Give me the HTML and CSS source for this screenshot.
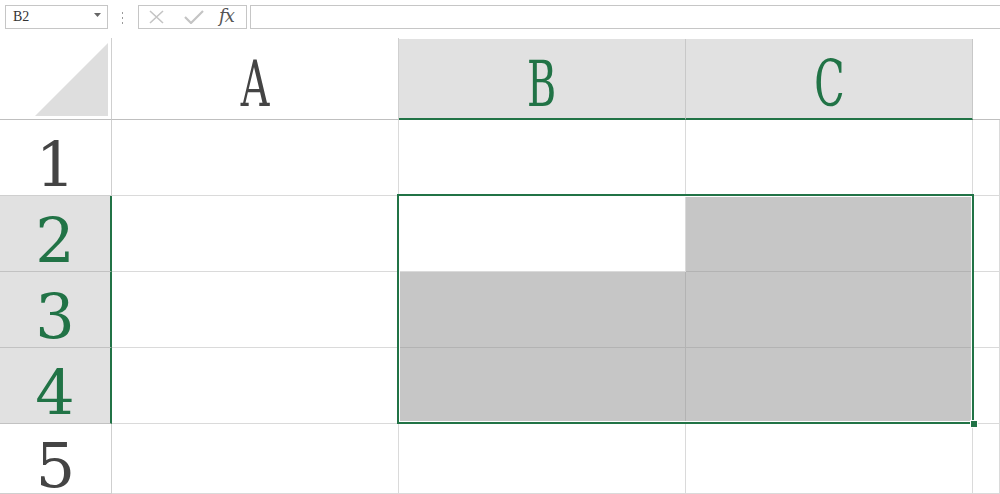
FILE: index.html
```html
<!DOCTYPE html>
<html lang="en">
<head>
  <meta charset="UTF-8" />
  <title>Sheet</title>
  <link rel="stylesheet" href="styles.css">
</head>
<body>

  <!-- Barra de fórmulas -->
  <div class="toolbar">
    <div class="namebox">
      <span>B2</span>
      <svg class="caret" width="7" height="4" viewBox="0 0 7 4"><path d="M0 0h7L3.5 4z" fill="#666"/></svg>
    </div>
    <svg class="grip" width="3" height="12" viewBox="0 0 3 12">
      <rect x="1" y="0" width="1" height="2" fill="#9a9a9a"/>
      <rect x="1" y="5" width="1" height="2" fill="#9a9a9a"/>
      <rect x="1" y="10" width="1" height="2" fill="#9a9a9a"/>
    </svg>
    <div class="fnbox">
      <svg width="17" height="14" viewBox="0 0 17 14"><path d="M2 1l13 12M15 1L2 13" stroke="#c4c4c4" stroke-width="1.6" fill="none"/></svg>
      <svg width="20" height="14" viewBox="0 0 20 14"><path d="M1 7l6 6L19 1" stroke="#c4c4c4" stroke-width="2.2" fill="none"/></svg>
      <span class="fx">fx</span>
    </div>
    <div class="formula"></div>
  </div>

  <!-- Hoja -->
  <div class="sheet">
    <div class="cell corner">
      <svg width="73" height="73" viewBox="0 0 73 73"><path d="M73 0V73H0z" fill="#dedede"/></svg>
    </div>
    <div class="cell colhead"><span class="letter">A</span></div>
    <div class="cell colhead sel"><span class="letter">B</span></div>
    <div class="cell colhead sel last"><span class="letter">C</span></div>
    <div class="cell colhead blank"></div>

    <div class="cell rowhead"><span class="num">1</span></div>
    <div class="cell"></div>
    <div class="cell"></div>
    <div class="cell"></div>
    <div class="cell"></div>

    <div class="cell rowhead sel"><span class="num">2</span></div>
    <div class="cell"></div>
    <div class="cell"></div>
    <div class="cell picked"></div>
    <div class="cell"></div>

    <div class="cell rowhead sel"><span class="num">3</span></div>
    <div class="cell"></div>
    <div class="cell picked"></div>
    <div class="cell picked"></div>
    <div class="cell"></div>

    <div class="cell rowhead sel"><span class="num">4</span></div>
    <div class="cell"></div>
    <div class="cell picked"></div>
    <div class="cell picked"></div>
    <div class="cell"></div>

    <div class="cell rowhead"><span class="num">5</span></div>
    <div class="cell"></div>
    <div class="cell"></div>
    <div class="cell"></div>
    <div class="cell"></div>

    <div class="selection"><span class="handle"></span></div>
  </div>

</body>
</html>
```

FILE: styles.css
```css
body {
  margin: 0;
  background: #fff;
  font-family: "Liberation Serif", "Times New Roman", "DejaVu Serif", "Noto Serif", serif;
  overflow: hidden;
}

/* barra superior */
.toolbar {
  height: 38px;
  display: flex;
  align-items: flex-start;
  padding: 5px 0 0 5px;
  box-sizing: border-box;
}

.namebox {
  width: 103px;
  height: 24px;
  border: 1px solid #c6c6c6;
  box-sizing: border-box;
  display: flex;
  align-items: center;
  justify-content: space-between;
  padding: 0 6px 0 7px;
  font-size: 14px;
  color: #333;
}

.caret {
  margin-top: -4px;
}

.grip {
  margin: 7px 14px 0 13px;
}

.fnbox {
  width: 109px;
  height: 24px;
  border: 1px solid #c6c6c6;
  box-sizing: border-box;
  display: flex;
  align-items: center;
  padding: 0 0 0 9px;
  gap: 18px;
}

.fnbox svg:nth-child(2) {
  margin-left: 1px;
}

.fx {
  font-family: "DejaVu Serif", "Liberation Serif", serif;
  font-style: italic;
  font-size: 18px;
  color: #555;
  margin-left: -3px;
  margin-top: -3px;
  letter-spacing: -1px;
}

.formula {
  flex: 1;
  height: 24px;
  margin-left: 3px;
  border: 1px solid #c6c6c6;
  border-right: none;
  box-sizing: border-box;
}

/* hoja */
.sheet {
  position: relative;
  display: grid;
  grid-template-columns: 112px 287px 287px 287px 1fr;
  grid-template-rows: 82px repeat(4, 76px) 1fr;
  height: 456px;
}

.cell {
  border-right: 1px solid #dadada;
  border-bottom: 1px solid #dadada;
  box-sizing: border-box;
  background: #fff;
}

.corner {
  display: flex;
  justify-content: flex-end;
  align-items: flex-end;
  padding: 0 3px 3px 0;
  border-right-color: #cfcfcf;
  border-bottom-color: #bfbfbf;
}

.colhead {
  display: flex;
  justify-content: center;
  align-items: center;
  padding-top: 10px;
  border-bottom-color: #bfbfbf;
  border-right-color: #d0d0d0;
  color: #444;
}

.colhead.sel {
  background: #e1e1e1;
  color: #217346;
  border-bottom: 2px solid #217346;
  border-right-color: #c8c8c8;
  margin-top: 1px;
}

.colhead.blank {
  border-right: none;
}

.letter {
  display: inline-block;
  font-family: "DejaVu Serif", "Liberation Serif", serif;
  font-size: 64px;
  line-height: 1;
  transform: scaleX(0.62);
}

.rowhead {
  display: flex;
  justify-content: center;
  align-items: center;
  padding-top: 14px;
  border-right-color: #cfcfcf;
  border-bottom-color: #cfcfcf;
  color: #444;
}

.rowhead.sel {
  background: #e1e1e1;
  color: #217346;
  border-right: 2px solid #217346;
  border-bottom-color: #c2c2c2;
}

.num {
  font-family: "DejaVu Serif", "Liberation Serif", serif;
  font-size: 62px;
  line-height: 0.8;
}

.picked {
  background: #c6c6c6;
  border-right-color: #b3b3b3;
  border-bottom-color: #b3b3b3;
}

.selection {
  position: absolute;
  left: 397px;
  top: 156px;
  width: 577px;
  height: 230px;
  border: 2px solid #217346;
  box-sizing: border-box;
  box-shadow: inset 0 0 0 1px #fff;
}

.handle {
  position: absolute;
  right: -5px;
  bottom: -5px;
  width: 6px;
  height: 6px;
  background: #217346;
  box-shadow: 0 0 0 1px #fff;
}
```
